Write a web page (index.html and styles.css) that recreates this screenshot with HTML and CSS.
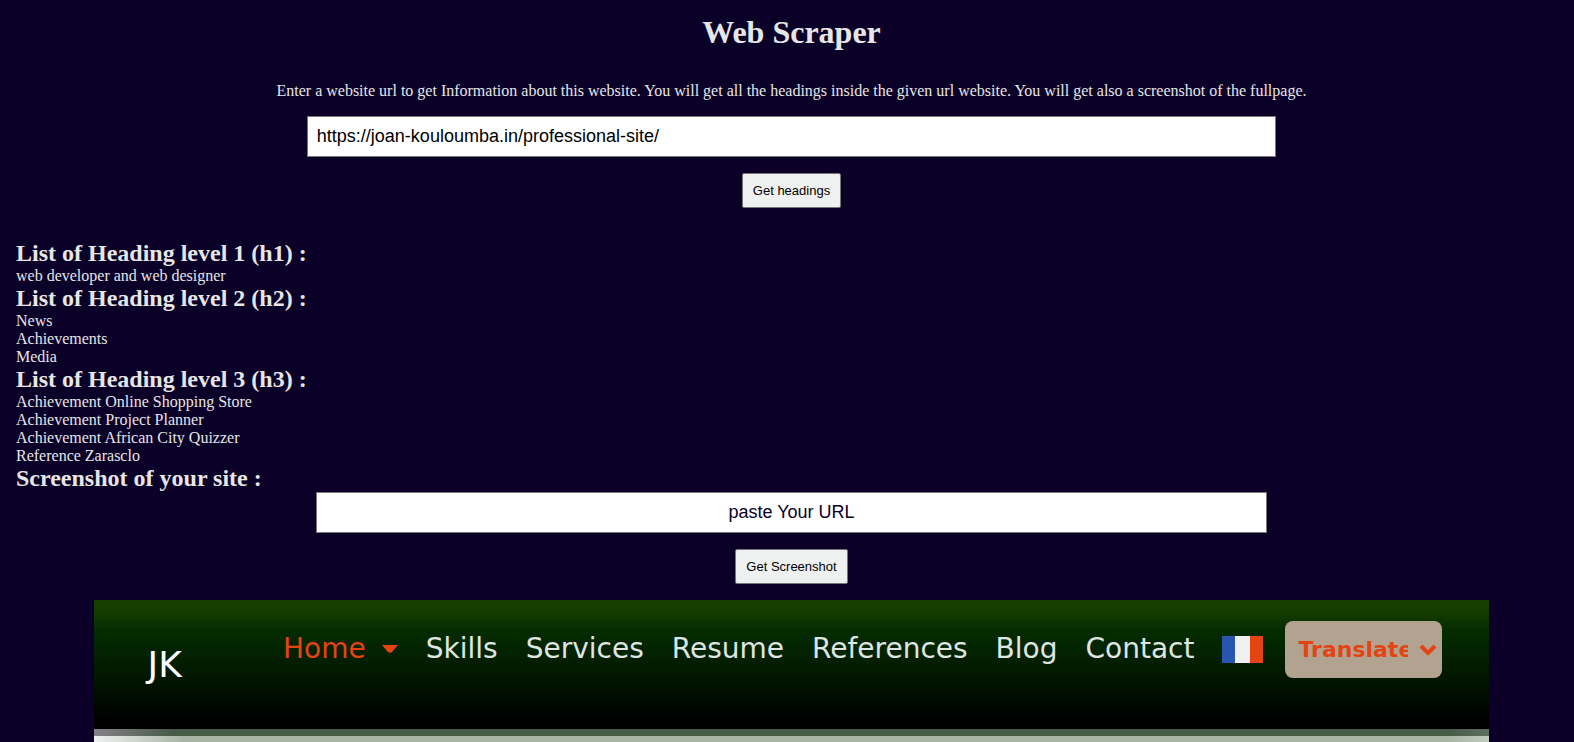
FILE: index.html
```html
<!DOCTYPE html>
<html lang="en">
<head>
<meta charset="utf-8">
<meta name="viewport" content="width=device-width, initial-scale=1">
<title>Web Scraper</title>
<link rel="stylesheet" href="styles.css">
</head>
<body>
<main class="page">
  <h1 class="title">Web Scraper</h1>
  <form class="form form-headings">
    <label class="intro" for="site-url">Enter a website url to get Information about this website. You will get all the headings inside the given url website. You will get also a screenshot of the fullpage.</label>
    <input class="field field-headings" id="site-url" type="text" value="https://joan-kouloumba.in/professional-site/">
    <button class="button" type="button">Get headings</button>
  </form>

  <section class="results">
    <h2 class="subtitle">List of Heading level 1 (h1) :</h2>
    <ul class="list">
      <li>web developer and web designer</li>
    </ul>
    <h2 class="subtitle">List of Heading level 2 (h2) :</h2>
    <ul class="list">
      <li>News</li>
      <li>Achievements</li>
      <li>Media</li>
    </ul>
    <h2 class="subtitle">List of Heading level 3 (h3) :</h2>
    <ul class="list">
      <li>Achievement Online Shopping Store</li>
      <li>Achievement Project Planner</li>
      <li>Achievement African City Quizzer</li>
      <li>Reference Zarasclo</li>
    </ul>
    <h2 class="subtitle">Screenshot of your site :</h2>
  </section>

  <form class="form">
    <input class="field field-shot" type="text" placeholder="paste Your URL" aria-label="Screenshot URL">
    <button class="button" type="button">Get Screenshot</button>
  </form>

  <section class="site">
    <header class="site-bar">
      <a class="logo" href="#">JK</a>
      <nav class="nav">
        <a class="nav-link nav-current" href="#">Home
          <svg class="caret" viewBox="0 0 16 8" aria-hidden="true"><path d="M0 0H16L10.500 6.500Q8 9 5.500 6.500Z" fill="#e34412"/></svg>
        </a>
        <a class="nav-link" href="#">Skills</a>
        <a class="nav-link" href="#">Services</a>
        <a class="nav-link" href="#">Resume</a>
        <a class="nav-link" href="#">References</a>
        <a class="nav-link" href="#">Blog</a>
        <a class="nav-link" href="#">Contact</a>
        <a class="flag-link" href="#" aria-label="French">
          <svg class="flag" viewBox="0 0 41 27" aria-hidden="true">
            <rect width="13" height="27" fill="#2855b0"/>
            <rect x="13" width="15" height="27" fill="#eff0f0"/>
            <rect x="28" width="13" height="27" fill="#e34412"/>
          </svg>
        </a>
        <span class="translate">
          <select class="translate-select" aria-label="Translate">
            <option>Translate</option>
          </select>
          <svg class="chevron" viewBox="0 0 18 12" aria-hidden="true"><path d="M2 2L9 9L16 2" fill="none" stroke="#e34412" stroke-width="4"/></svg>
        </span>
      </nav>
    </header>
    <div class="site-edge"></div>
    <div class="site-hero"></div>
  </section>
</main>
</body>
</html>
```
FILE: styles.css
```css
* {
  box-sizing: border-box;
}

body {
  margin: 0;
  background: #0b0028;
  color: #e6e6e6;
  font: 16px/18px "Liberation Serif", "Times New Roman", serif;
}

.page {
  display: flex;
  flex-direction: column;
  min-height: 100vh;
  padding: 14px 7px 0 16px;
}

.title {
  margin: 0 0 31px;
  font-size: 32px;
  line-height: 37px;
  text-align: center;
}

.form {
  display: flex;
  flex-direction: column;
  align-items: center;
  gap: 16px;
  margin: 0 0 16px;
}

.form-headings {
  margin-bottom: 32px;
}

.intro {
  text-align: center;
}

.field {
  padding: 9px;
  border: 1px solid #767676;
  border-radius: 0;
  background: #fff;
  color: #000;
  font: 18px/21px "Liberation Sans", Arial, sans-serif;
}

.field-headings {
  width: 62.5%;
}

.field-shot {
  box-sizing: content-box;
  width: 60%;
  text-align: center;
}

.field-shot::placeholder {
  color: #0b0028;
  opacity: 1;
}

.button {
  padding: 9px 10px;
  border: 1px solid #767676;
  border-radius: 2px;
  background: #eff0f0;
  color: #000;
  font: 13px/15px "Liberation Sans", Arial, sans-serif;
}

.subtitle {
  margin: 0;
  font-size: 24px;
  line-height: 27px;
}

.list {
  margin: 0;
  padding: 0;
  list-style: none;
}

.site {
  display: flex;
  flex: 1;
  flex-direction: column;
  align-self: center;
  width: 90%;
  font-family: "DejaVu Sans", Verdana, sans-serif;
}

.site-bar {
  display: flex;
  flex-wrap: wrap;
  align-items: flex-start;
  justify-content: space-between;
  padding: 21px 47px 42px 54px;
  background: linear-gradient(#184000 0, #163e00 10px, #042c00 30px, #021800 75px, #000800 105px, #000 120px);
}

.logo {
  padding-top: 22px;
  color: #fff;
  font-size: 36px;
  line-height: 44px;
  text-decoration: none;
}

.nav {
  display: flex;
  flex-wrap: wrap;
  align-items: center;
  column-gap: 28px;
}

.nav-link {
  padding-bottom: 2px;
  color: #dfe6e2;
  font-size: 28px;
  line-height: 34px;
  text-decoration: none;
}

.nav-current {
  display: flex;
  align-items: center;
  gap: 16px;
  color: #e34412;
}

.caret {
  width: 16px;
  height: 8px;
}

.flag {
  display: block;
  width: 41px;
  height: 27px;
}

.translate {
  position: relative;
  margin-left: -6px;
}

.translate-select {
  display: block;
  width: 157px;
  height: 57px;
  padding: 0 34px 0 13px;
  border: 0;
  border-radius: 8px;
  appearance: none;
  background: #b2a390;
  color: #e34412;
  font: bold 22px/28px "DejaVu Sans", Verdana, sans-serif;
}

.chevron {
  position: absolute;
  top: 23px;
  right: 5px;
  width: 18px;
  height: 12px;
  pointer-events: none;
}

.site-edge {
  height: 7px;
  background: linear-gradient(90deg, #85828a 0, #465b46 80px, #465b46 97%, #5f705f);
}

.site-hero {
  flex: 1;
  min-height: 6px;
  background: linear-gradient(90deg, #f0f0f0 0, #e0e5e0 20px, #a7b4a4 90px, #a7b4a4 97%, #c0cabd);
}
```
